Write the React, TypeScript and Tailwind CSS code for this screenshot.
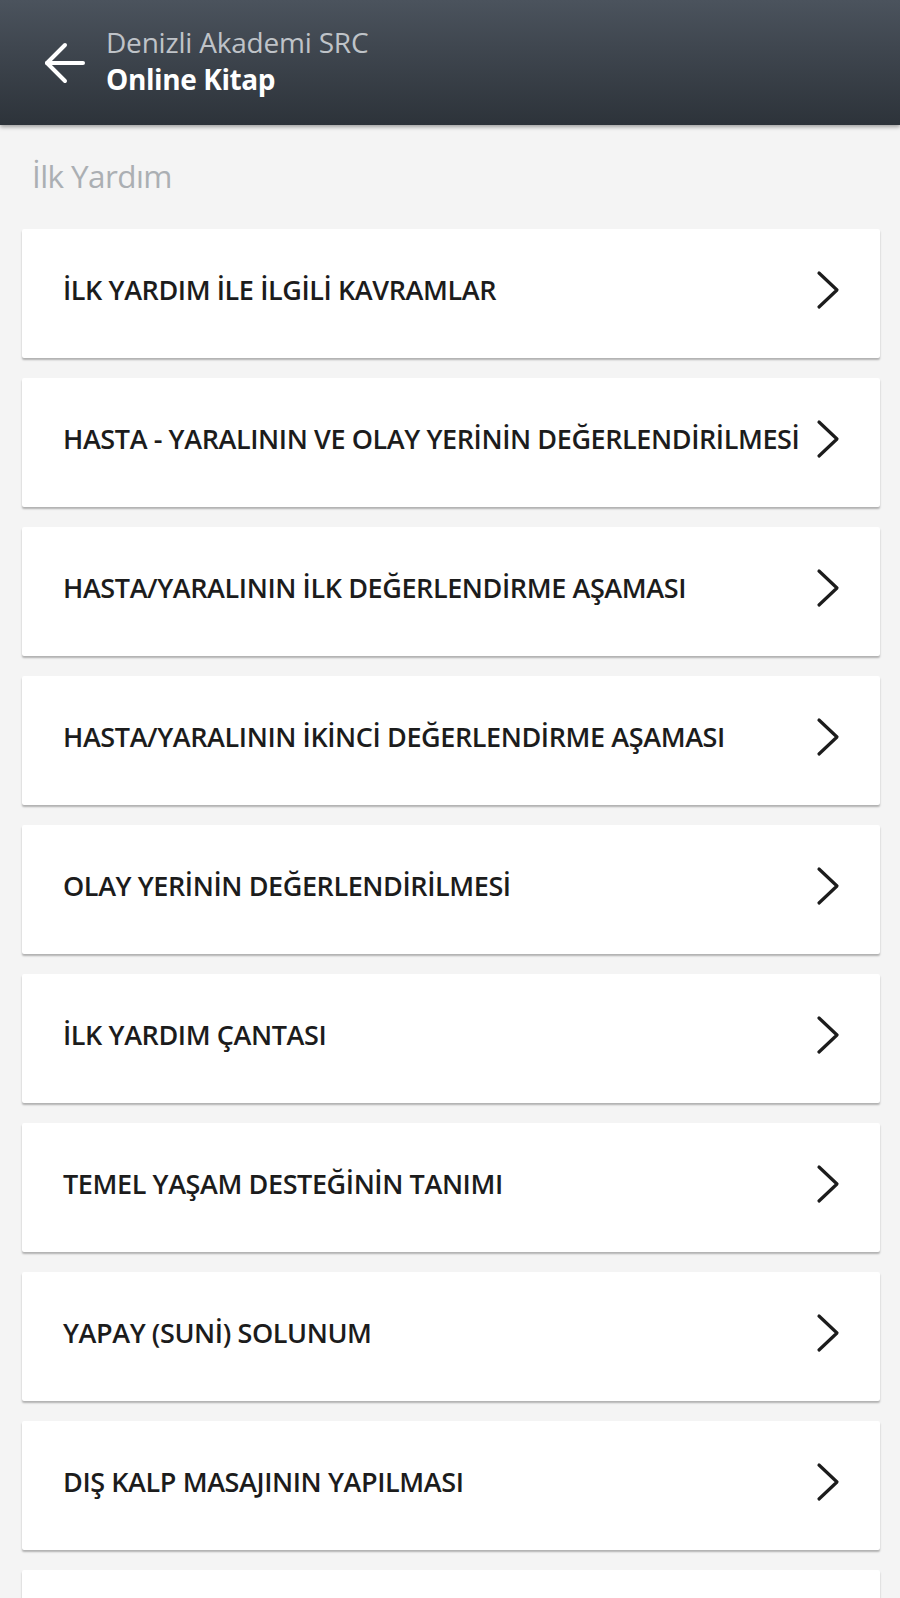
import React from 'react';

const chapters = [
  'İLK YARDIM İLE İLGİLİ KAVRAMLAR',
  'HASTA - YARALININ VE OLAY YERİNİN DEĞERLENDİRİLMESİ',
  'HASTA/YARALININ İLK DEĞERLENDİRME AŞAMASI',
  'HASTA/YARALININ İKİNCİ DEĞERLENDİRME AŞAMASI',
  'OLAY YERİNİN DEĞERLENDİRİLMESİ',
  'İLK YARDIM ÇANTASI',
  'TEMEL YAŞAM DESTEĞİNİN TANIMI',
  'YAPAY (SUNİ) SOLUNUM',
  'DIŞ KALP MASAJININ YAPILMASI',
];

const BackArrow = () => (
  <svg width="42" height="42" viewBox="0 0 42 42" fill="none" stroke="currentColor" strokeWidth="4" strokeLinecap="round" strokeLinejoin="round">
    <path d="M39 21H3" />
    <path d="M21 3 3 21l18 18" />
  </svg>
);

const Chevron = () => (
  <svg width="24" height="40" viewBox="0 0 24 40" fill="none" stroke="currentColor" strokeWidth="3.2" strokeLinecap="round" strokeLinejoin="round">
    <path d="M3 3l18 17L3 37" />
  </svg>
);

export default function App() {
  return (
    <div className="min-h-screen bg-[#f4f4f4] font-['Open_Sans',sans-serif]">
      {/* Header */}
      <header className="h-[125px] flex items-center bg-gradient-to-b from-[#4b535d] to-[#2d333a] shadow-[0_2px_4px_rgba(0,0,0,0.35)]">
        <button className="ml-[44px] mr-[20px] text-white">
          <BackArrow />
        </button>
        <div className="flex flex-col -mt-[6px]">
          <span className="text-[28px] leading-[38px] text-[#bfc3c8] tracking-[-0.2px]">Denizli Akademi SRC</span>
          <span className="text-[28px] leading-[36px] font-bold text-white tracking-[-0.4px]">Online Kitap</span>
        </div>
      </header>

      <main className="pl-[22px] pr-[20px]">
        <h2 className="pt-[30px] pl-[10px] text-[31.5px] leading-[42px] text-[#abafb3] tracking-[-0.6px]">İlk Yardım</h2>

        <ul className="mt-[32px] flex flex-col gap-[20px]">
          {chapters.map((title) => (
            <li
              key={title}
              className="h-[129px] flex items-center justify-between bg-white rounded-[2px] pl-[41px] pr-[40px] pb-[6px] shadow-[0_2px_2px_rgba(0,0,0,0.28)]"
            >
              <span className="text-[27px] font-semibold text-[#1c1c1c] tracking-[-0.4px] whitespace-nowrap">{title}</span>
              <span className="text-[#1c1c1c] shrink-0 -mt-[2px]">
                <Chevron />
              </span>
            </li>
          ))}
          <li className="h-[129px] bg-white rounded-[2px] shadow-[0_2px_2px_rgba(0,0,0,0.28)]" />
        </ul>
      </main>
    </div>
  );
}
